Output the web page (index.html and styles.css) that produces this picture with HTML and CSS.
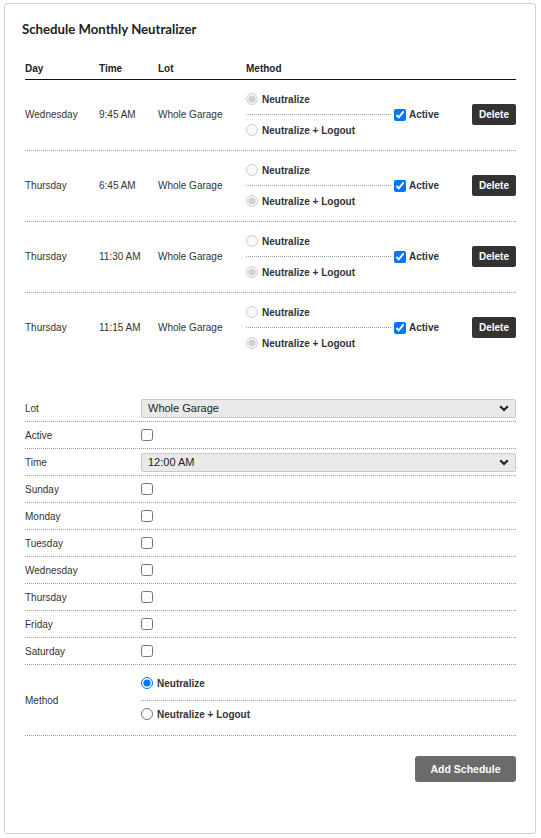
FILE: index.html
```html
<!DOCTYPE html>
<html>
<head>
<meta charset="utf-8">
<link rel="stylesheet" href="styles.css">
</head>
<body>
<div class="card">
  <h1 class="title">Schedule Monthly Neutralizer</h1>

  <div class="sched">
    <div class="srow head">
      <div>Day</div><div>Time</div><div>Lot</div><div>Method</div><div></div><div></div>
    </div>

    <div class="srow">
      <div>Wednesday</div><div>9:45 AM</div><div>Whole Garage</div>
      <div class="method">
        <label class="opt first"><input type="radio" disabled checked name="m1">Neutralize</label>
        <label class="opt second"><input type="radio" disabled name="m1">Neutralize + Logout</label>
      </div>
      <label class="act"><input type="checkbox" checked>Active</label>
      <button class="del">Delete</button>
    </div>

    <div class="srow">
      <div>Thursday</div><div>6:45 AM</div><div>Whole Garage</div>
      <div class="method">
        <label class="opt first"><input type="radio" disabled name="m2">Neutralize</label>
        <label class="opt second"><input type="radio" disabled checked name="m2">Neutralize + Logout</label>
      </div>
      <label class="act"><input type="checkbox" checked>Active</label>
      <button class="del">Delete</button>
    </div>

    <div class="srow">
      <div>Thursday</div><div>11:30 AM</div><div>Whole Garage</div>
      <div class="method">
        <label class="opt first"><input type="radio" disabled name="m3">Neutralize</label>
        <label class="opt second"><input type="radio" disabled checked name="m3">Neutralize + Logout</label>
      </div>
      <label class="act"><input type="checkbox" checked>Active</label>
      <button class="del">Delete</button>
    </div>

    <div class="srow last">
      <div>Thursday</div><div>11:15 AM</div><div>Whole Garage</div>
      <div class="method">
        <label class="opt first"><input type="radio" disabled name="m4">Neutralize</label>
        <label class="opt second"><input type="radio" disabled checked name="m4">Neutralize + Logout</label>
      </div>
      <label class="act"><input type="checkbox" checked>Active</label>
      <button class="del">Delete</button>
    </div>
  </div>

  <div class="form">
    <div class="frow">
      <div class="lbl">Lot</div>
      <div class="selwrap">
        <select class="sel"><option>Whole Garage</option></select>
        <svg class="chev" width="10" height="7" viewBox="0 0 10 7"><polyline points="1.2,1.2 5,5 8.8,1.2" fill="none" stroke="#222" stroke-width="2.2"/></svg>
      </div>
    </div>
    <div class="frow"><div class="lbl">Active</div><div><input class="cb" type="checkbox"></div></div>
    <div class="frow">
      <div class="lbl">Time</div>
      <div class="selwrap">
        <select class="sel"><option>12:00 AM</option></select>
        <svg class="chev" width="10" height="7" viewBox="0 0 10 7"><polyline points="1.2,1.2 5,5 8.8,1.2" fill="none" stroke="#222" stroke-width="2.2"/></svg>
      </div>
    </div>
    <div class="frow"><div class="lbl">Sunday</div><div><input class="cb" type="checkbox"></div></div>
    <div class="frow"><div class="lbl">Monday</div><div><input class="cb" type="checkbox"></div></div>
    <div class="frow"><div class="lbl">Tuesday</div><div><input class="cb" type="checkbox"></div></div>
    <div class="frow"><div class="lbl">Wednesday</div><div><input class="cb" type="checkbox"></div></div>
    <div class="frow"><div class="lbl">Thursday</div><div><input class="cb" type="checkbox"></div></div>
    <div class="frow"><div class="lbl">Friday</div><div><input class="cb" type="checkbox"></div></div>
    <div class="frow"><div class="lbl">Saturday</div><div><input class="cb" type="checkbox"></div></div>
    <div class="frow mrow">
      <div class="lbl">Method</div>
      <div class="fmethod">
        <label class="fopt first"><input type="radio" name="fm" checked>Neutralize</label>
        <label class="fopt second"><input type="radio" name="fm">Neutralize + Logout</label>
      </div>
    </div>
  </div>

  <div class="actions">
    <button class="add">Add Schedule</button>
  </div>
</div>
</body>
</html>
```

FILE: styles.css
```css
html, body {
  margin: 0;
  padding: 0;
  background: #fff;
}

body {
  font-family: "Liberation Sans", Arial, sans-serif;
  font-size: 10px;
  color: #333;
}

.card {
  box-sizing: border-box;
  width: 532px;
  height: 831px;
  margin: 3px 0 0 4px;
  border: 1px solid #cfcfcf;
  border-radius: 3px;
  padding: 17px 19px 0 20px;
}

.title {
  margin: 0 0 0 -3px;
  font-family: Lato, "Open Sans", sans-serif;
  font-weight: 700;
  font-size: 13.2px;
  line-height: 16px;
  color: #222;
}

.sched {
  margin-top: 25px;
  margin-bottom: 32px;
}

.srow {
  display: grid;
  grid-template-columns: 74px 59px 88px 145px 1fr auto;
  align-items: center;
  border-bottom: 1px dotted #999;
  padding: 7px 0 8px;
}

.srow.last {
  border-bottom: none;
}

.srow.head {
  padding: 0 0 3px;
  line-height: 14px;
  font-weight: 700;
  color: #222;
  border-bottom: 1px solid #111;
  align-items: end;
}

.method {
  display: flex;
  flex-direction: column;
}

.opt {
  display: flex;
  align-items: center;
  height: 14px;
  font-weight: 700;
  color: #333;
}

.opt.first {
  padding: 5px 0 8px;
  border-bottom: 1px dotted #999;
}

.opt.second {
  padding: 8px 0 5px;
}

.opt input {
  margin: 0 4px 0 0;
  width: 12px;
  height: 12px;
}

.act {
  display: flex;
  align-items: center;
  font-weight: 700;
  color: #333;
}

.act input {
  margin: 0 3px 0 3px;
  width: 12px;
  height: 12px;
}

.del {
  width: 44px;
  height: 21px;
  padding: 0;
  border: none;
  border-radius: 2px;
  background: #333;
  color: #fff;
  font-family: "Liberation Sans", Arial, sans-serif;
  font-weight: 700;
  font-size: 10px;
}

.frow {
  display: grid;
  grid-template-columns: 116px 1fr;
  align-items: center;
  min-height: 26px;
  border-bottom: 1px dotted #999;
}

.lbl {
  color: #333;
}

.cb {
  display: block;
  margin: 0;
  width: 12px;
  height: 12px;
}

.selwrap {
  position: relative;
  height: 19px;
}

.sel {
  appearance: none;
  -webkit-appearance: none;
  box-sizing: border-box;
  width: 100%;
  height: 19px;
  margin: 0;
  padding: 0 0 0 6px;
  border: 1px solid #c8c8c8;
  border-radius: 2px;
  background: #e9e9e9;
  font-family: "Liberation Sans", Arial, sans-serif;
  font-size: 11px;
  color: #222;
}

.chev {
  position: absolute;
  right: 7px;
  top: 6px;
  pointer-events: none;
}

.fmethod {
  display: flex;
  flex-direction: column;
}

.fopt {
  display: flex;
  align-items: center;
  height: 14px;
  font-weight: 700;
  color: #333;
}

.fopt.first {
  padding: 11px 0 10px;
  border-bottom: 1px dotted #999;
}

.fopt.second {
  padding: 6px 0 14px;
}

.fopt input {
  margin: 0 4px 0 0;
  width: 12px;
  height: 12px;
}

.actions {
  display: flex;
  justify-content: flex-end;
  margin-top: 20px;
}

.add {
  width: 101px;
  height: 26px;
  padding: 0;
  border: none;
  border-radius: 3px;
  background: #6b6b6b;
  color: #fff;
  font-family: "Liberation Sans", Arial, sans-serif;
  font-weight: 700;
  font-size: 10.5px;
}
```
